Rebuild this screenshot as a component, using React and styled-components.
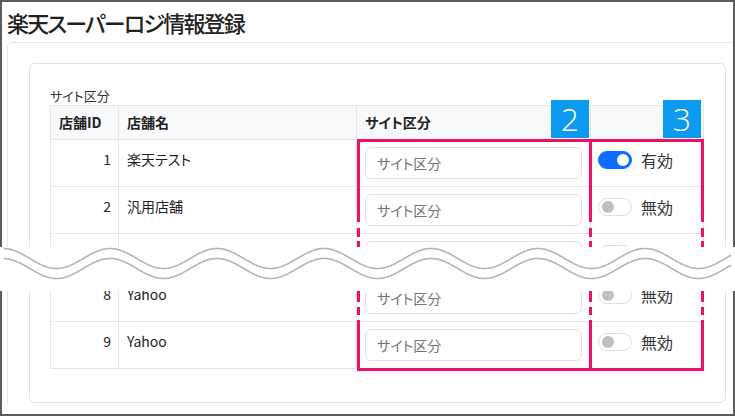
import React from "react";
import styled, { createGlobalStyle } from "styled-components";

const GlobalStyle = createGlobalStyle`
  body {
    margin: 0;
    background: #fff;
    font-family: "Noto Sans CJK JP", "Noto Sans", sans-serif;
    font-feature-settings: "palt";
    color: #222;
  }
`;

const PINK = "#ee0f6a";
const LINE = "#e3e6e9";

const Frame = styled.div`
  position: relative;
  width: 735px;
  height: 416px;
  box-sizing: border-box;
  border: 2px solid #5c5c5c;
  background: #fff;
`;

const Page = styled.div`
  height: 100%;
  overflow: hidden;
`;

const Title = styled.h1`
  margin: 5px 0 0 5px;
  font-size: 22px;
  line-height: 30px;
  font-weight: 500;
  letter-spacing: -1.8px;
  color: #222;
`;

const OuterCard = styled.div`
  margin: 5px -15px 0 5px;
  padding: 20px 21px 2px 21px;
  border: 1px solid #e6e8ea;
  border-bottom: none;
  border-radius: 5px 5px 0 0;
`;

const InnerCard = styled.div`
  padding: 22px 20px 33px 20px;
  border: 1px solid #e0e3e6;
  border-radius: 6px;
`;

const Caption = styled.div`
  font-size: 13px;
  line-height: 19px;
  color: #333;
`;

const Table = styled.div`
  position: relative;
  width: 654px;
  box-sizing: border-box;
  border-top: 1px solid ${LINE};
  border-left: 1px solid ${LINE};
`;

const Row = styled.div`
  display: grid;
  grid-template-columns: 68px 238px 234px 113px;
  height: ${(p) => p.$h}px;
  box-sizing: border-box;
  border-bottom: 1px solid ${LINE};
  background: ${(p) => (p.$head ? "#f8f9fa" : "#fff")};
  font-weight: ${(p) => (p.$head ? 700 : 400)};
  overflow: hidden;
`;

const Cell = styled.div`
  box-sizing: border-box;
  border-right: 1px solid ${LINE};
  padding: ${(p) => (p.$head ? "5px 8px 0" : "9px 7px 0 8px")};
  font-size: 14px;
  line-height: ${(p) => (p.$head ? "22px" : "20px")};
  color: #222;
  text-align: ${(p) => (p.$right ? "right" : "left")};
  white-space: nowrap;
`;

const InputCell = styled.div`
  box-sizing: border-box;
  border-right: 1px solid ${LINE};
  padding: 7px 8px 0;
`;

const TextInput = styled.input`
  display: block;
  width: 100%;
  height: 32px;
  box-sizing: border-box;
  padding: 0 11px;
  border: 1px solid #dfe2e5;
  border-radius: 6px;
  background: #fff;
  font-family: "Noto Sans CJK JP", sans-serif;
  font-feature-settings: "palt";
  font-size: 14px;
  outline: none;
  &::placeholder {
    color: #6f7479;
  }
`;

const SwitchCell = styled.div`
  box-sizing: border-box;
  border-right: 1px solid ${LINE};
  padding: 11px 7px 0;
  display: flex;
  align-items: flex-start;
  gap: 9px;
`;

const Switch = styled.span`
  position: relative;
  flex: none;
  width: 34px;
  height: 18px;
  box-sizing: border-box;
  border-radius: 9px;
  border: 1px solid ${(p) => (p.$on ? "#0d6efd" : "#dcdfe2")};
  background: ${(p) => (p.$on ? "#0d6efd" : "#fff")};

  &::after {
    content: "";
    position: absolute;
    top: 2px;
    left: ${(p) => (p.$on ? "18px" : "3px")};
    width: 12px;
    height: 12px;
    border-radius: 50%;
    background: ${(p) => (p.$on ? "#fff" : "#bfbfbf")};
  }
`;

const SwitchLabel = styled.span`
  font-size: 16px;
  line-height: 18px;
  color: #333;
`;

const Mark = styled.div`
  position: absolute;
  top: 33px;
  left: ${(p) => p.$left}px;
  width: ${(p) => p.$w}px;
  height: 232px;
  box-sizing: border-box;
  border-top: 3px solid ${PINK};
  border-bottom: 3px solid ${PINK};
  display: flex;
  justify-content: space-between;
  pointer-events: none;
`;

const Rail = styled.div`
  display: flex;
  flex-direction: column;
  width: 3px;
`;

const Seg = styled.div`
  height: ${(p) => p.$h}px;
  background: ${(p) => (p.$ink ? PINK : "transparent")};
`;

const Badge = styled.div`
  position: absolute;
  right: 3px;
  bottom: calc(100% + 4px);
  width: 38px;
  height: 38px;
  background: #0c9aef;
  color: #fff;
  font-family: "Open Sans", "Noto Sans", sans-serif;
  font-weight: 300;
  font-size: 32px;
  line-height: 38px;
  text-align: center;
`;

const Band = styled.div`
  position: absolute;
  left: -2px;
  right: -2px;
  top: 245px;
  height: 44px;
  background: #fff;
  z-index: 2;

  svg {
    display: block;
    overflow: visible;
  }
`;

// solid, gap, dash... pattern of the pink side lines around the cut
const railPattern = [
  [80, true], [6, false], [9, true], [4, false], [9, true], [41, false],
  [11, true], [5, false], [8, true], [5, false], [48, true],
];

const rows = [
  { id: 1, name: "楽天テスト", on: true },
  { id: 2, name: "汎用店舗", on: false },
  { id: 3, name: "Qoo10一般", on: false, h: 41 },
  { id: 8, name: "Yahoo", on: false },
  { id: 9, name: "Yahoo", on: false },
];

function wavePath(cy) {
  let d = "";
  for (let x = 4; x <= 731; x += 1) {
    const y = cy - 10 * Math.cos((2 * Math.PI * (x - 3)) / 107);
    d += `${x === 4 ? "M" : "L"}${x} ${y.toFixed(2)} `;
  }
  return d;
}

function SideRail() {
  return (
    <Rail>
      {railPattern.map(([h, ink], i) => (
        <Seg key={i} $h={h} $ink={ink} />
      ))}
    </Rail>
  );
}

function Annotation({ left, width, num }) {
  return (
    <Mark $left={left} $w={width}>
      <SideRail />
      <SideRail />
      <Badge>{num}</Badge>
    </Mark>
  );
}

export default function App() {
  return (
    <Frame>
      <GlobalStyle />
      <Page>
        <Title>楽天スーパーロジ情報登録</Title>
        <OuterCard>
          <InnerCard>
            <Caption>サイト区分</Caption>
            <Table>
              <Row $h={34} $head>
                <Cell $head>店舗ID</Cell>
                <Cell $head>店舗名</Cell>
                <Cell $head>サイト区分</Cell>
                <Cell $head></Cell>
              </Row>
              {rows.map((r) => (
                <Row key={r.id} $h={r.h || 47}>
                  <Cell $right>{r.id}</Cell>
                  <Cell>{r.name}</Cell>
                  <InputCell>
                    <TextInput placeholder="サイト区分" readOnly />
                  </InputCell>
                  <SwitchCell>
                    <Switch $on={r.on} />
                    <SwitchLabel>{r.on ? "有効" : "無効"}</SwitchLabel>
                  </SwitchCell>
                </Row>
              ))}
              <Annotation left={306} width={235} num="2" />
              <Annotation left={538} width={115} num="3" />
            </Table>
          </InnerCard>
        </OuterCard>
      </Page>
      <Band>
        <svg width="739" height="44" viewBox="0 0 739 44">
          <path d={wavePath(11.5)} fill="none" stroke="#b3b3b3" strokeWidth="1.6" />
          <path d={wavePath(21.5)} fill="none" stroke="#b3b3b3" strokeWidth="1.6" />
        </svg>
      </Band>
    </Frame>
  );
}
